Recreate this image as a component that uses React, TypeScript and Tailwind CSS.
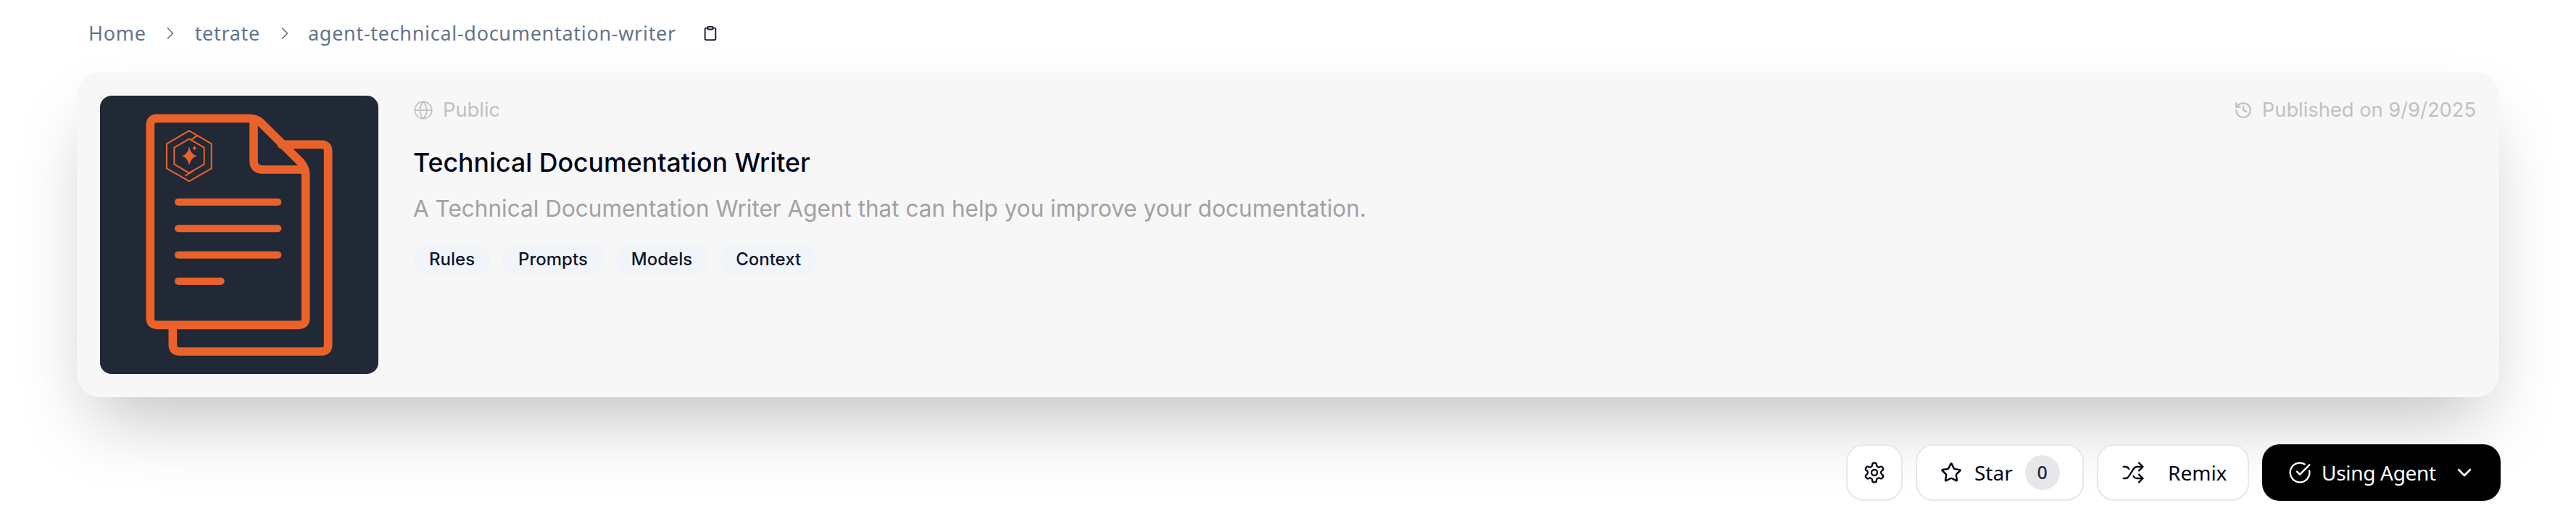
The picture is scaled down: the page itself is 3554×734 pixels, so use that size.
import { ChevronDown, ChevronRight, CircleCheckBig, Clipboard, Globe, History, Shuffle, Star } from "lucide-react";

const TAGS = ["Rules", "Prompts", "Models", "Context"];

function AgentLogo() {
  return (
    <svg viewBox="84 66 1152 1152" className="w-[384px] h-[384px]" fill="none" stroke="#ea622a" strokeLinecap="round" strokeLinejoin="round">
      <g strokeWidth="35">
        <path d="M835 268H1000Q1028 268 1028 296V1097Q1028 1125 1000 1125H413Q385 1125 385 1097V1025" />
        <path d="M700 160H320Q292 160 292 188V987Q292 1015 320 1015H907Q935 1015 935 987V395Q935 365 915 342L750 178Q730 160 700 160Z" />
        <path d="M720 165V335Q720 372 757 372H930" />
      </g>
      <g strokeWidth="30">
        <path d="M408 506H820" />
        <path d="M408 616H820" />
        <path d="M408 725H820" />
        <path d="M408 834H584" />
      </g>
      <g strokeWidth="6" strokeLinecap="butt" strokeLinejoin="miter">
        <path d="M453 211L545 265V367L453 420L360 367V265Z" />
        <path d="M453 245L515 281V350L453 386L391 350V281Z" />
        <path d="M462 248L488 230" />
        <path d="M436 398L466 380" />
      </g>
      <path d="M453 276Q459 310 486 315Q459 322 453 355Q447 322 422 315Q447 310 453 276Z" fill="#ea622a" stroke="none" />
      <path d="M475 273Q477 281 485 283Q477 286 475 293Q473 286 466 283Q473 281 475 273Z" fill="#ea622a" stroke="none" />
    </svg>
  );
}

function GearIcon() {
  return (
    <svg viewBox="0 0 24 24" className="w-[32px] h-[32px]" fill="none" stroke="currentColor" strokeWidth="1.75" strokeLinecap="round" strokeLinejoin="round">
      <path d="M12.22 2h-.44a2 2 0 0 0-2 2v.18a2 2 0 0 1-1 1.73l-.43.25a2 2 0 0 1-2 0l-.15-.08a2 2 0 0 0-2.73.73l-.22.38a2 2 0 0 0 .73 2.73l.15.1a2 2 0 0 1 1 1.72v.51a2 2 0 0 1-1 1.74l-.15.09a2 2 0 0 0-.73 2.73l.22.38a2 2 0 0 0 2.73.73l.15-.08a2 2 0 0 1 2 0l.43.25a2 2 0 0 1 1 1.73V20a2 2 0 0 0 2 2h.44a2 2 0 0 0 2-2v-.18a2 2 0 0 1 1-1.73l.43-.25a2 2 0 0 1 2 0l.15.08a2 2 0 0 0 2.73-.73l.22-.39a2 2 0 0 0-.73-2.73l-.15-.08a2 2 0 0 1-1-1.74v-.5a2 2 0 0 1 1-1.74l.15-.09a2 2 0 0 0 .73-2.73l-.22-.38a2 2 0 0 0-2.73-.73l-.15.08a2 2 0 0 1-2 0l-.43-.25a2 2 0 0 1-1-1.73V4a2 2 0 0 0-2-2z" />
      <circle cx="12" cy="12" r="3" />
    </svg>
  );
}

export default function App() {
  return (
    <div className="w-full h-[734px] bg-white overflow-hidden px-[104px] font-['Inter',sans-serif]">
      <nav className="flex items-center h-[92px] pl-[18px] text-[27px] tracking-[0.7px] text-[#64748b] font-['Noto_Sans',sans-serif]">
        <span>Home</span>
        <ChevronRight size={28} strokeWidth={1.5} className="ml-[19px] mr-[20px]" />
        <span>tetrate</span>
        <ChevronRight size={28} strokeWidth={1.5} className="ml-[20px] mr-[18px]" />
        <span>agent-technical-documentation-writer</span>
        <Clipboard size={22} strokeWidth={2} className="ml-[36px] text-[#0f172a]" />
      </nav>

      <section className="mt-[8px] mx-[2px] flex gap-[48px] h-[448px] p-[32px] rounded-[32px] bg-[#f7f7f7] shadow-[0_50px_100px_-24px_rgba(0,0,0,0.25)]">
        <div className="w-[384px] h-[384px] rounded-[16px] bg-[#212836] overflow-hidden shrink-0">
          <AgentLogo />
        </div>
        <div className="flex-1 min-w-0">
          <div className="flex items-center justify-between h-[40px] text-[27.3px] text-[#c2bfc3]">
            <div className="flex items-center gap-[13px]">
              <Globe size={28} strokeWidth={1.5} />
              <span>Public</span>
            </div>
            <div className="flex items-center gap-[13px]">
              <History size={26} strokeWidth={2} />
              <span>Published on 9/9/2025</span>
            </div>
          </div>
          <h1 className="mt-[30px] text-[35.7px] leading-[44px] font-medium text-[#020617]">Technical Documentation Writer</h1>
          <p className="mt-[22px] text-[31.5px] leading-[40px] text-[#a3a0a5]">A Technical Documentation Writer Agent that can help you improve your documentation.</p>
          <div className="mt-[28px] flex gap-[16px]">
            {TAGS.map((tag) => (
              <span key={tag} className="h-[44px] px-[22px] flex items-center rounded-full bg-[#f1f5f9] text-[24px] font-medium text-[#0f172a]">
                {tag}
              </span>
            ))}
          </div>
        </div>
      </section>

      <div className="mt-[65px] flex justify-end gap-[18px] text-[28px] font-['Noto_Sans',sans-serif]">
        <button className="w-[78px] h-[78px] flex items-center justify-center rounded-[24px] border-2 border-[#e2e8f0] bg-white text-[#020617]">
          <GearIcon />
        </button>
        <button className="w-[232px] h-[78px] flex items-center pl-[32px] rounded-[24px] border-2 border-[#e2e8f0] bg-white text-[#020617]">
          <Star size={30} strokeWidth={2} />
          <span className="ml-[17px]">Star</span>
          <span className="ml-[17px] w-[48px] h-[48px] flex items-center justify-center rounded-full bg-[#e5e7eb] text-[25px] font-medium text-[#1e293b]">0</span>
        </button>
        <button className="w-[210px] h-[78px] flex items-center pl-[32px] rounded-[24px] border-2 border-[#e2e8f0] bg-white text-[#020617]">
          <Shuffle size={32} strokeWidth={1.75} />
          <span className="ml-[32px]">Remix</span>
        </button>
        <button className="w-[329px] h-[78px] flex items-center pl-[36px] rounded-[24px] bg-black text-white">
          <CircleCheckBig size={32} strokeWidth={1.75} />
          <span className="ml-[14px] tracking-[-0.3px]">Using Agent</span>
          <ChevronDown size={32} strokeWidth={2} className="ml-[23px]" />
        </button>
      </div>
    </div>
  );
}
